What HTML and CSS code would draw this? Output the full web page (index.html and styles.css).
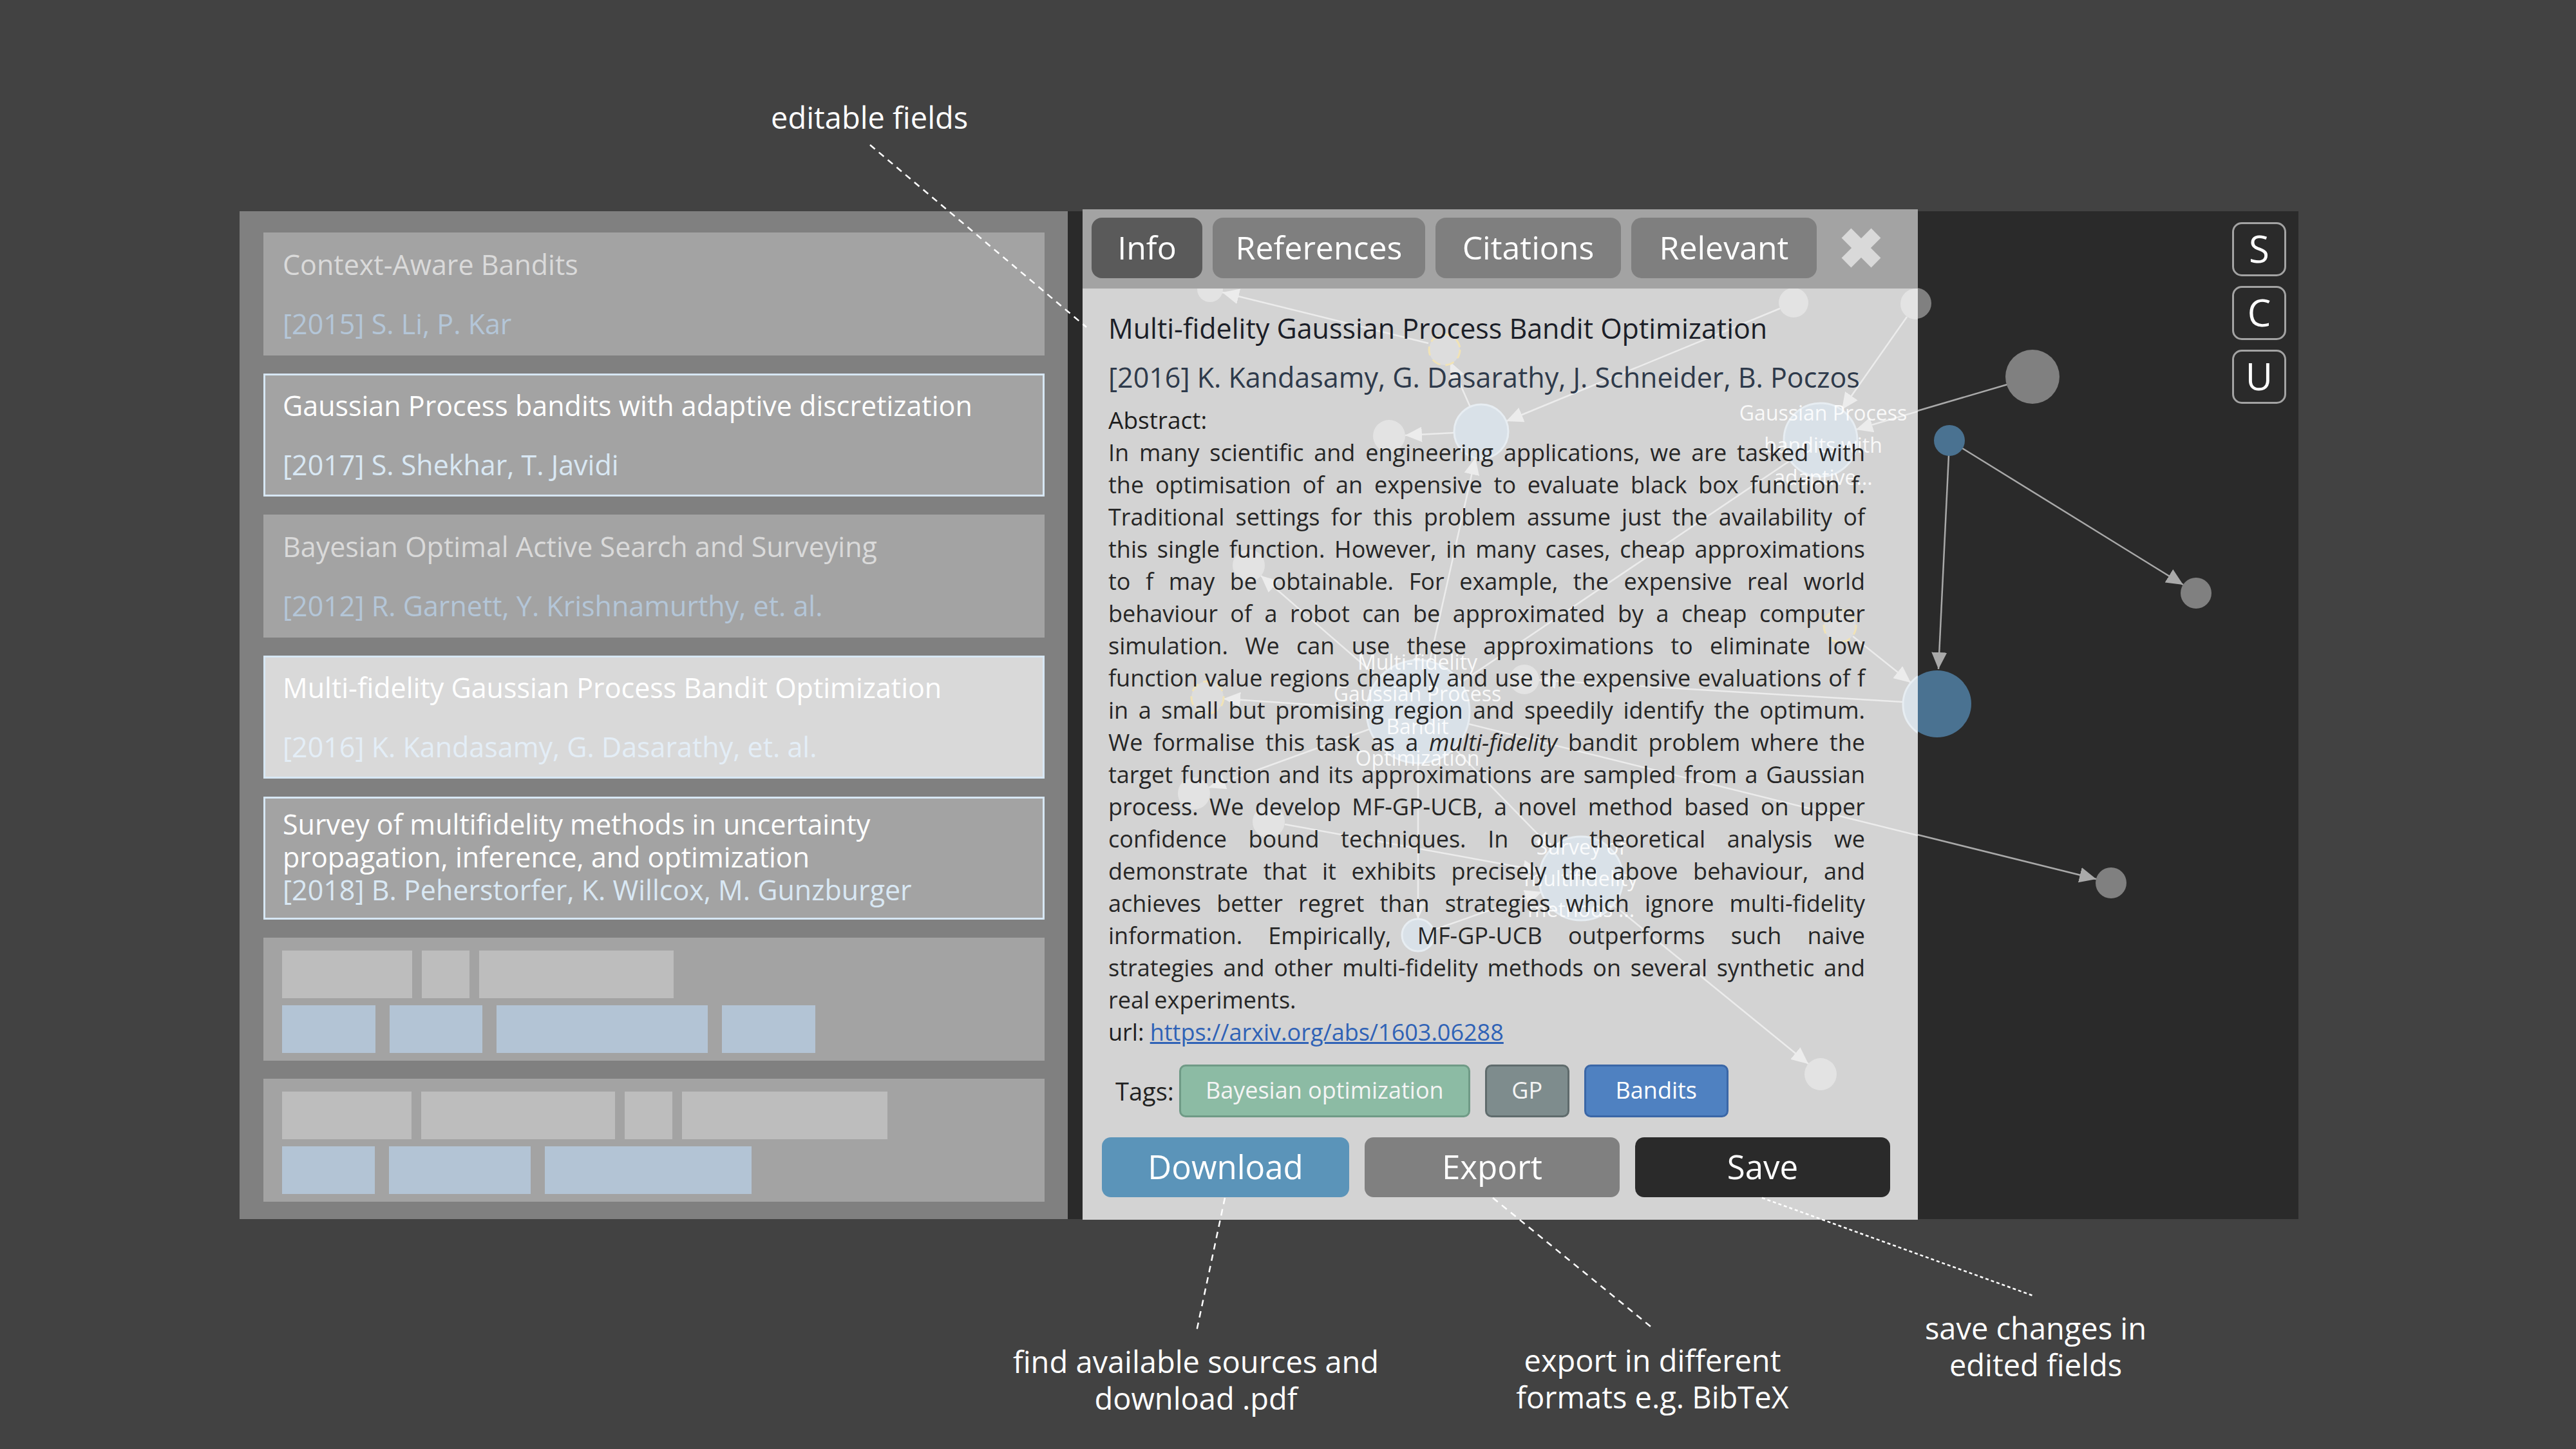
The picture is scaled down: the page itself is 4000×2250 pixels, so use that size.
FILE: index.html
```html
<!DOCTYPE html>
<html lang="en">
<head>
<meta charset="utf-8">
<title>Paper explorer</title>
<link rel="stylesheet" href="styles.css">
</head>
<body>
<div class="page">
  <header class="top-notes"><span class="note">editable fields</span></header>

  <main class="app">
    <section class="list">
      <article class="card">
        <div class="c-title">Context-Aware Bandits</div>
        <div class="c-auth">[2015] S. Li, P. Kar</div>
      </article>
      <article class="card sel">
        <div class="c-title">Gaussian Process bandits with adaptive discretization</div>
        <div class="c-auth">[2017] S. Shekhar, T. Javidi</div>
      </article>
      <article class="card">
        <div class="c-title">Bayesian Optimal Active Search and Surveying</div>
        <div class="c-auth">[2012] R. Garnett, Y. Krishnamurthy, et. al.</div>
      </article>
      <article class="card sel active">
        <div class="c-title">Multi-fidelity Gaussian Process Bandit Optimization</div>
        <div class="c-auth">[2016] K. Kandasamy, G. Dasarathy, et. al.</div>
      </article>
      <article class="card sel multi">
        <div class="c-title">Survey of multifidelity methods in uncertainty<br>propagation, inference, and optimization</div>
        <div class="c-auth">[2018] B. Peherstorfer, K. Willcox, M. Gunzburger</div>
      </article>
      <article class="card ph">
        <div class="ph-row grey"><span style="width:202px"></span><span style="width:74px"></span><span style="width:302px"></span></div>
        <div class="ph-row blue"><span style="width:145px"></span><span style="width:144px"></span><span style="width:328px"></span><span style="width:145px"></span></div>
      </article>
      <article class="card ph">
        <div class="ph-row grey"><span style="width:201px"></span><span style="width:301px"></span><span style="width:74px"></span><span style="width:319px"></span></div>
        <div class="ph-row blue"><span style="width:144px"></span><span style="width:220px"></span><span style="width:321px"></span></div>
      </article>
    </section>

    <section class="graph">
      <svg class="graph-svg" viewBox="1658 329 1911 1565" width="1911" height="1565">
        <defs>
          <marker id="ah" markerUnits="userSpaceOnUse" markerWidth="26" markerHeight="24" refX="26" refY="12" orient="auto">
            <path d="M0,0 L26,12 L0,24 z" fill="#a9a9a9"/>
          </marker>
        </defs>
        <g class="edges-dark">
          <line x1="3047" y1="697" x2="3390" y2="909" marker-end="url(#ah)"/>
          <line x1="3026" y1="708" x2="3010" y2="1040" marker-end="url(#ah)"/>
          <line x1="3117" y1="598" x2="2882" y2="667" marker-end="url(#ah)"/>
          <line x1="2961" y1="492" x2="2860" y2="636" marker-end="url(#ah)"/>
          <line x1="2280" y1="1124" x2="3255" y2="1366" marker-end="url(#ah)"/>
          <line x1="2877" y1="988" x2="2967" y2="1060" marker-end="url(#ah)"/>
          <line x1="2955" y1="1090" x2="2390" y2="1056"/>
        </g>
        <g>
          <circle cx="2975" cy="472" r="24" fill="#808080"/>
          <circle cx="3156" cy="586" r="42" fill="#808080"/>
          <circle cx="3027" cy="685" r="24" fill="#4a7291"/>
          <circle cx="3410" cy="922" r="24" fill="#808080"/>
          <ellipse cx="3008" cy="1094" rx="53" ry="52" fill="#4a7291"/>
          <circle cx="3278" cy="1372" r="24" fill="#808080"/>
        </g>
      </svg>

      <div class="view-btns">
        <div class="vbtn">S</div>
        <div class="vbtn">C</div>
        <div class="vbtn">U</div>
      </div>

      <div class="detail">
        <nav class="tabs">
          <div class="tab on t-info">Info</div>
          <div class="tab t-ref">References</div>
          <div class="tab t-cit">Citations</div>
          <div class="tab t-rel">Relevant</div>
          <svg class="close" viewBox="0 0 62 62" width="62" height="62"><path d="M8 8 L54 54 M54 8 L8 54" stroke="#d9d9d9" stroke-width="21"/></svg>
        </nav>

        <svg class="ghost" viewBox="1681 448 1297 1446" width="1297" height="1446">
          <defs>
            <clipPath id="pc"><rect x="1681" y="448" width="1297" height="1446"/></clipPath>
            <marker id="ahl" markerUnits="userSpaceOnUse" markerWidth="26" markerHeight="24" refX="26" refY="12" orient="auto">
              <path d="M0,0 L26,12 L0,24 z" fill="#ececec"/>
            </marker>
          </defs>
          <g clip-path="url(#pc)">
            <g class="edges-light">
              <line x1="2764" y1="479" x2="2339" y2="654" marker-end="url(#ahl)"/>
              <line x1="2961" y1="492" x2="2860" y2="636" marker-end="url(#ahl)"/>
              <line x1="3117" y1="598" x2="2882" y2="667" marker-end="url(#ahl)"/>
              <line x1="2218" y1="533" x2="1898" y2="454" marker-end="url(#ahl)"/>
              <line x1="2283" y1="632" x2="2252" y2="562" marker-end="url(#ahl)"/>
              <line x1="2258" y1="672" x2="2182" y2="676" marker-end="url(#ahl)"/>
              <line x1="2220" y1="1027" x2="2291" y2="711" marker-end="url(#ahl)"/>
              <line x1="2122" y1="1100" x2="1900" y2="1085" marker-end="url(#ahl)"/>
              <line x1="2127" y1="1132" x2="1877" y2="1223" marker-end="url(#ahl)"/>
              <line x1="2202" y1="1185" x2="2202" y2="1427" marker-end="url(#ahl)"/>
              <line x1="2268" y1="1060" x2="2780" y2="715"/>
              <line x1="1995" y1="1280" x2="2391" y2="1352" marker-end="url(#ahl)"/>
              <line x1="2226" y1="1444" x2="2394" y2="1385" marker-end="url(#ahl)"/>
              <line x1="2505" y1="1405" x2="2808" y2="1652" marker-end="url(#ahl)"/>
              <line x1="2258" y1="1162" x2="2410" y2="1318" marker-end="url(#ahl)"/>
              <line x1="2141" y1="1053" x2="1958" y2="894" marker-end="url(#ahl)"/>
              <line x1="2280" y1="1124" x2="3255" y2="1366" marker-end="url(#ahl)"/>
              <line x1="2877" y1="988" x2="2967" y2="1060" marker-end="url(#ahl)"/>
              <line x1="2955" y1="1090" x2="2390" y2="1056" marker-end="url(#ahl)"/>
            </g>
            <g class="gn">
              <circle cx="2785" cy="470" r="23"/>
              <circle cx="2975" cy="472" r="24"/>
              <circle cx="1879" cy="449" r="20"/>
              <circle cx="2157" cy="677" r="25"/>
              <circle cx="1939" cy="878" r="25"/>
              <circle cx="2367" cy="1055" r="23"/>
              <circle cx="1854" cy="1232" r="25"/>
              <circle cx="1970" cy="1276" r="25"/>
              <circle cx="2827" cy="1668" r="25"/>
            </g>
            <g class="yn">
              <circle cx="2243" cy="543" r="24"/>
              <circle cx="2857" cy="972" r="25"/>
              <circle cx="1875" cy="1083" r="25"/>
            </g>
            <g class="bn">
              <circle cx="2300" cy="670" r="42"/>
              <circle cx="2827" cy="683" r="57"/>
              <circle cx="2202" cy="1105" r="80"/>
              <circle cx="2455" cy="1364" r="65"/>
              <circle cx="2202" cy="1452" r="25"/>
              <circle cx="3008" cy="1094" r="53"/>
            </g>
          </g>
          <g class="lbl">
            <text x="2831" y="653">Gaussian Process</text>
            <text x="2831" y="703">bandits with</text>
            <text x="2831" y="753">adaptive...</text>
            <text x="2201" y="1040">Multi-fidelity</text>
            <text x="2201" y="1089">Gaussian Process</text>
            <text x="2201" y="1140">Bandit</text>
            <text x="2201" y="1189">Optimization</text>
            <text x="2455" y="1327">Survey of</text>
            <text x="2455" y="1376">multifidelity</text>
            <text x="2455" y="1424">methods ...</text>
          </g>
        </svg>

        <div class="detail-body">
          <h1 class="d-title">Multi-fidelity Gaussian Process Bandit Optimization</h1>
          <div class="d-auth">[2016] K. Kandasamy, G. Dasarathy, J. Schneider, B. Poczos</div>
          <div class="d-label">Abstract:</div>
          <p class="abstract">
            <span class="ln">In many scientific and engineering applications, we are tasked with</span>
            <span class="ln">the optimisation of an expensive to evaluate black box function f.</span>
            <span class="ln">Traditional settings for this problem assume just the availability of</span>
            <span class="ln">this single function. However, in many cases, cheap approximations</span>
            <span class="ln">to f may be obtainable. For example, the expensive real world</span>
            <span class="ln">behaviour of a robot can be approximated by a cheap computer</span>
            <span class="ln">simulation. We can use these approximations to eliminate low</span>
            <span class="ln">function value regions cheaply and use the expensive evaluations of f</span>
            <span class="ln">in a small but promising region and speedily identify the optimum.</span>
            <span class="ln">We formalise this task as a <i>multi-fidelity</i> bandit problem where the</span>
            <span class="ln">target function and its approximations are sampled from a Gaussian</span>
            <span class="ln">process. We develop MF-GP-UCB, a novel method based on upper</span>
            <span class="ln">confidence bound techniques. In our theoretical analysis we</span>
            <span class="ln">demonstrate that it exhibits precisely the above behaviour, and</span>
            <span class="ln">achieves better regret than strategies which ignore multi-fidelity</span>
            <span class="ln">information. Empirically, MF-GP-UCB outperforms such naive</span>
            <span class="ln">strategies and other multi-fidelity methods on several synthetic and</span>
            <span class="ln end">real experiments.</span>
          </p>
          <div class="url">url: <a href="#">https://arxiv.org/abs/1603.06288</a></div>
          <div class="tags">
            <span class="tags-label">Tags:</span>
            <span class="tag tag-bo">Bayesian optimization</span>
            <span class="tag tag-gp">GP</span>
            <span class="tag tag-bd">Bandits</span>
          </div>
        </div>

        <div class="actions">
          <div class="btn b-dl">Download</div>
          <div class="btn b-ex">Export</div>
          <div class="btn b-sv">Save</div>
        </div>
      </div>
    </section>
  </main>

  <footer class="bottom-notes">
    <div class="fn fn-dl">find available sources and<br>download .pdf</div>
    <div class="fn fn-ex">export in different<br>formats e.g. BibTeX</div>
    <div class="fn fn-sv">save changes in<br>edited fields</div>
  </footer>

  <svg class="callouts" viewBox="0 0 4000 2250" width="4000" height="2250">
    <line class="dash" x1="1351" y1="225" x2="1687" y2="508"/>
    <line class="dash" x1="1902" y1="1860" x2="1858" y2="2067"/>
    <line class="dash" x1="2318" y1="1860" x2="2567" y2="2063"/>
    <line class="dot" x1="2736" y1="1860" x2="3157" y2="2012"/>
  </svg>
</div>
</body>
</html>
```

FILE: styles.css
```css
* { box-sizing: border-box; }

body {
  margin: 0;
  background: #424242;
  font-family: "Open Sans", "Noto Sans", "DejaVu Sans", sans-serif;
}

.page {
  position: relative;
  width: 4000px;
  height: 2250px;
  overflow: hidden;
}

/* ---------- annotations ---------- */
.top-notes {
  height: 328px;
  padding: 153px 0 0 1197px;
}
.note {
  color: #ffffff;
  font-size: 47px;
  line-height: 58px;
}

.bottom-notes {
  height: 357px;
  display: flex;
  align-items: flex-start;
}
.fn {
  color: #ffffff;
  font-size: 47px;
  line-height: 57px;
  text-align: center;
  flex: none;
}
.fn-dl { width: 680px; margin-left: 1517px; margin-top: 193px; }
.fn-ex { width: 500px; margin-left: 119px; margin-top: 191px; }
.fn-sv { width: 440px; margin-left: 125px; margin-top: 141px; }

.callouts {
  position: absolute;
  left: 0;
  top: 0;
  pointer-events: none;
}
.callouts line {
  stroke: #ffffff;
  stroke-width: 2.5;
}
.callouts .dash { stroke-dasharray: 10 8; }
.callouts .dot { stroke-dasharray: 5 4; }

/* ---------- app frame ---------- */
.app {
  display: flex;
  margin-left: 372px;
  width: 3197px;
  height: 1565px;
}

/* ---------- list ---------- */
.list {
  width: 1286px;
  flex: none;
  background: #808080;
  padding: 33px 36px 0 37px;
  display: flex;
  flex-direction: column;
  gap: 28px;
}
.card {
  flex: none;
  height: 191px;
  background: #a3a3a3;
  border: 3px solid #a3a3a3;
  padding: 21px 27px;
  display: flex;
  flex-direction: column;
  justify-content: space-between;
  font-size: 43px;
  line-height: 51px;
}
.card.sel { border-color: #d7e7f4; }
.card.active { background: #d9d9d9; }
.card.multi { padding-top: 14px; padding-bottom: 14px; justify-content: flex-start; }
.c-title { color: #dadada; white-space: nowrap; }
.c-auth { color: #b4c6d8; white-space: nowrap; }
.sel .c-title { color: #ffffff; }
.sel .c-auth { color: #d9e8f4; }
.active .c-auth { color: #e4eef7; }

.card.ph {
  padding: 17px 20px 0 26px;
  justify-content: flex-start;
}
.ph-row {
  display: flex;
  height: 74px;
}
.ph-row span { display: block; height: 74px; }
.ph-row.grey { gap: 15px; }
.ph-row.grey span { background: #bdbdbd; }
.ph-row.blue { gap: 22px; margin-top: 11px; }
.ph-row.blue span { background: #b3c4d5; }

/* ---------- graph ---------- */
.graph {
  flex: 1;
  position: relative;
  background: #2a2a2a;
}
.graph-svg {
  position: absolute;
  left: 0;
  top: 0;
}
.edges-dark line {
  stroke: #a9a9a9;
  stroke-width: 2.5;
}

.view-btns {
  position: absolute;
  top: 17px;
  right: 19px;
  display: flex;
  flex-direction: column;
  gap: 15px;
}
.vbtn {
  width: 84px;
  height: 84px;
  border: 3px solid #a3a3a3;
  border-radius: 15px;
  color: #ffffff;
  font-size: 58px;
  line-height: 76px;
  text-align: center;
}

/* ---------- detail panel ---------- */
.detail {
  position: absolute;
  left: 23px;
  top: -3px;
  width: 1297px;
  height: 1569px;
  background: #d3d3d3;
  display: flex;
  flex-direction: column;
}

.tabs {
  flex: none;
  height: 123px;
  background: #a3a3a3;
  padding: 13px 14px 0;
  display: flex;
  align-items: flex-start;
  gap: 16px;
}
.tab {
  height: 94px;
  border-radius: 16px;
  background: #7f7f7f;
  color: #ffffff;
  font-size: 50px;
  line-height: 92px;
  text-align: center;
}
.tab.on { background: #5a5a5a; }
.t-info { width: 172px; }
.t-ref { width: 330px; }
.t-cit { width: 288px; }
.t-rel { width: 288px; }
.close { margin-top: 16px; margin-left: 22px; }

.ghost {
  position: absolute;
  left: 0;
  top: 123px;
  overflow: visible;
}
.edges-light line {
  stroke: #ececec;
  stroke-width: 2.5;
}
.gn circle { fill: #e3e3e3; }
.yn circle {
  fill: #dddddd;
  stroke: #f1e3b6;
  stroke-width: 3;
  stroke-dasharray: 14 8;
}
.bn circle {
  fill: #d9e1e8;
  stroke: #e7edf2;
  stroke-width: 3;
}
.lbl text {
  fill: #ffffff;
  fill-opacity: 0.88;
  font-family: "Open Sans", "Noto Sans", sans-serif;
  font-size: 32px;
  text-anchor: middle;
}

.detail-body {
  position: relative;
  padding: 37px 82px 0 40px;
  color: #262626;
}
.d-title {
  margin: 0;
  font-size: 43px;
  font-weight: 400;
  line-height: 50px;
  color: #1b1e28;
  white-space: nowrap;
}
.d-auth {
  margin-top: 26px;
  font-size: 43px;
  line-height: 50px;
  color: #2e3a4b;
  white-space: nowrap;
}
.d-label {
  margin-top: 16px;
  font-size: 37px;
  line-height: 50px;
  color: #1e1e1e;
}
.abstract {
  margin: 1px 0 0;
  font-size: 36px;
  line-height: 50px;
  color: #262626;
}
.ln {
  display: block;
  text-align: justify;
  text-align-last: justify;
  word-spacing: -2px;
}
.ln.end { text-align-last: left; }
.url {
  font-size: 36px;
  line-height: 50px;
  color: #1e1e1e;
}
.url a { color: #2f62b6; text-decoration: underline; }

.tags {
  margin-top: 25px;
  display: flex;
  align-items: center;
  height: 82px;
}
.tags-label {
  font-size: 38px;
  color: #222222;
  padding-left: 11px;
  margin-right: 8px;
}
.tag {
  height: 82px;
  border: 3px solid;
  border-radius: 10px;
  font-size: 36px;
  line-height: 74px;
  text-align: center;
  color: #f4f4f4;
  margin-right: 23px;
}
.tag-bo { width: 452px; background: #8cbba4; border-color: #6f9a86; }
.tag-gp { width: 131px; background: #7e8c8d; border-color: #5f6b6c; }
.tag-bd { width: 224px; background: #4f81c1; border-color: #3a66a6; color: #ffffff; }

.actions {
  margin-top: 31px;
  padding-left: 30px;
  display: grid;
  grid-template-columns: 384px 396px 396px;
  column-gap: 24px;
}
.btn {
  height: 93px;
  border-radius: 14px;
  color: #ffffff;
  font-size: 51px;
  line-height: 90px;
  text-align: center;
}
.b-dl { background: #5b94b9; }
.b-ex { background: #808080; }
.b-sv { background: #2a2a2a; }
```
